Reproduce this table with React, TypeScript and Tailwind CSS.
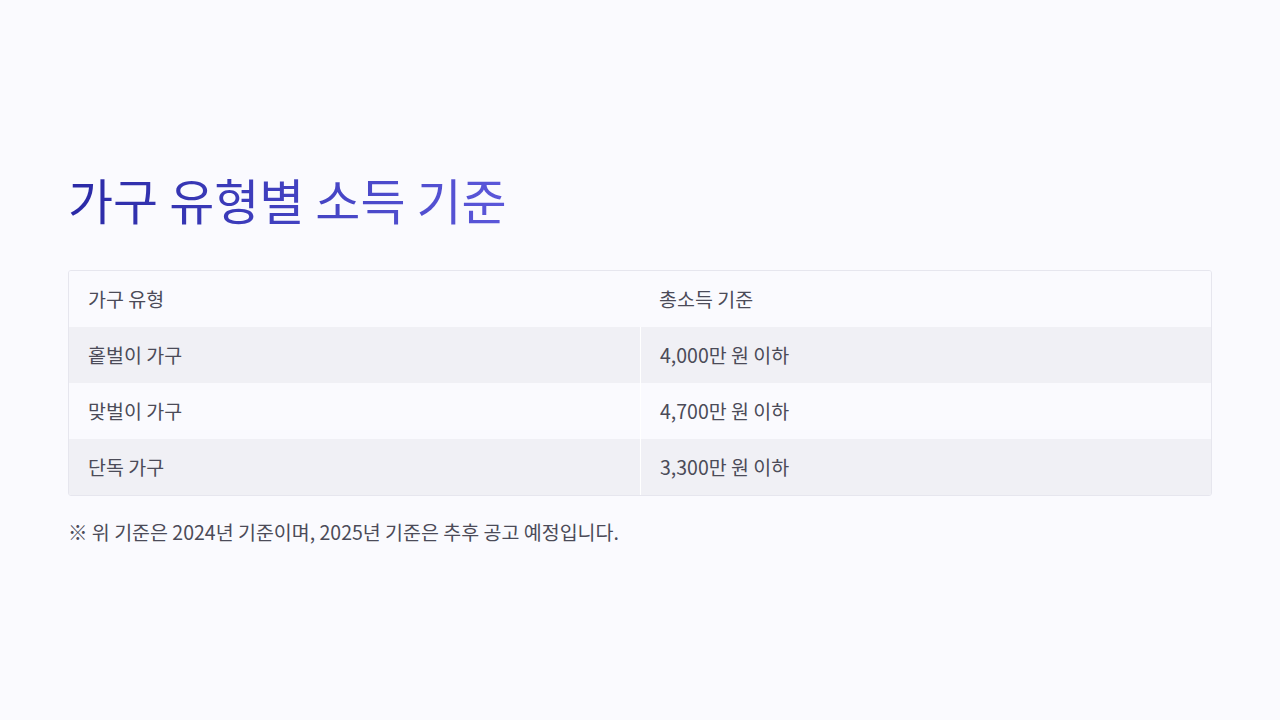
import React from "react";

const rows = [
  { type: "홑벌이 가구", income: "4,000만 원 이하" },
  { type: "맞벌이 가구", income: "4,700만 원 이하" },
  { type: "단독 가구", income: "3,300만 원 이하" },
];

const font = { fontFamily: '"Noto Sans CJK KR", "Noto Sans", sans-serif' };

export default function App() {
  return (
    <div className="min-h-screen w-full bg-[#fafafe] text-[#4b4b58]" style={font}>
      <div className="px-[68px] pt-[163px]">
        <h1 className="inline-block bg-gradient-to-r from-[#2a29a6] to-[#5b57da] bg-clip-text text-[49px] leading-[72px] font-normal text-transparent">
          가구 유형별 소득 기준
        </h1>

        {/* table */}
        <div className="mt-[35px] overflow-hidden rounded-[3px] border border-[#e6e6ee]">
          <div className="grid grid-cols-2 h-[56px] items-center bg-[#fafafe]">
            <div className="pl-[19px] text-[19.5px]">가구 유형</div>
            <div className="pl-[19px] text-[19.5px]">총소득 기준</div>
          </div>
          {rows.map((r, i) => (
            <div
              key={r.type}
              className={
                "grid grid-cols-2 h-[56px] " +
                (i % 2 === 0 ? "bg-[#f0f0f5]" : "bg-[#fafafe]")
              }
            >
              <div className="flex items-center pl-[19px] text-[19.5px]">{r.type}</div>
              <div className="flex items-center border-l border-white pl-[19px] text-[19.5px]">
                {r.income}
              </div>
            </div>
          ))}
        </div>

        <p className="mt-[21px] text-[19.5px] leading-[30px]">
          ※ 위 기준은 2024년 기준이며, 2025년 기준은 추후 공고 예정입니다.
        </p>
      </div>
    </div>
  );
}
